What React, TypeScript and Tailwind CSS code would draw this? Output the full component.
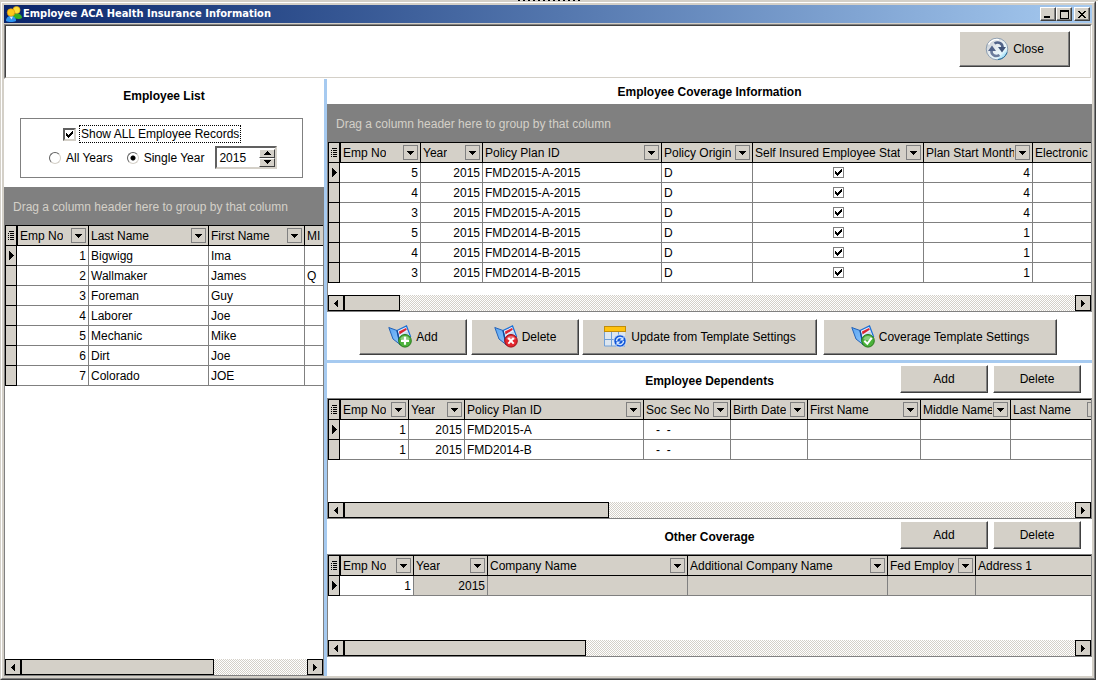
import { useId, useState } from "react";
import type { ReactNode } from "react";
import clsx from "clsx";

type Cell = string | boolean;

type Column = {
  label: string;
  width?: string;
  align?: "right" | "center";
  filter?: boolean;
};

const employeeColumns: Column[] = [
  { label: "Emp No", width: "w-[72px]", align: "right", filter: true },
  { label: "Last Name", width: "w-[120px]", filter: true },
  { label: "First Name", width: "w-[96px]", filter: true },
  { label: "MI" },
];

const employees: Cell[][] = [
  ["1", "Bigwigg", "Ima", ""],
  ["2", "Wallmaker", "James", "Q"],
  ["3", "Foreman", "Guy", ""],
  ["4", "Laborer", "Joe", ""],
  ["5", "Mechanic", "Mike", ""],
  ["6", "Dirt", "Joe", ""],
  ["7", "Colorado", "JOE", ""],
];

const coverageColumns: Column[] = [
  { label: "Emp No", width: "w-[81px]", align: "right", filter: true },
  { label: "Year", width: "w-[62px]", align: "right", filter: true },
  { label: "Policy Plan ID", width: "w-[179px]", filter: true },
  { label: "Policy Origin", width: "w-[91px]", filter: true },
  { label: "Self Insured Employee Stat", width: "w-[171px]", align: "center", filter: true },
  { label: "Plan Start Month", width: "w-[109px]", align: "right", filter: true },
  { label: "Electronic" },
];

const coverage: Cell[][] = [
  ["5", "2015", "FMD2015-A-2015", "D", true, "4", ""],
  ["4", "2015", "FMD2015-A-2015", "D", true, "4", ""],
  ["3", "2015", "FMD2015-A-2015", "D", true, "4", ""],
  ["5", "2015", "FMD2014-B-2015", "D", true, "1", ""],
  ["4", "2015", "FMD2014-B-2015", "D", true, "1", ""],
  ["3", "2015", "FMD2014-B-2015", "D", true, "1", ""],
];

const dependentColumns: Column[] = [
  { label: "Emp No", width: "w-[69px]", align: "right", filter: true },
  { label: "Year", width: "w-[56px]", align: "right", filter: true },
  { label: "Policy Plan ID", width: "w-[179px]", filter: true },
  { label: "Soc Sec No", width: "w-[87px]", filter: true },
  { label: "Birth Date", width: "w-[77px]", filter: true },
  { label: "First Name", width: "w-[113px]", filter: true },
  { label: "Middle Name", width: "w-[90px]", filter: true },
  { label: "Last Name", width: "w-[93px]", filter: true },
];

const dependents: Cell[][] = [
  ["1", "2015", "FMD2015-A", "\u00a0\u00a0\u00a0-\u00a0 -", "", "", "", ""],
  ["1", "2015", "FMD2014-B", "\u00a0\u00a0\u00a0-\u00a0 -", "", "", "", ""],
];

const otherColumns: Column[] = [
  { label: "Emp No", width: "w-[74px]", align: "right", filter: true },
  { label: "Year", width: "w-[74px]", align: "right", filter: true },
  { label: "Company Name", width: "w-[200px]", filter: true },
  { label: "Additional Company Name", width: "w-[200px]", filter: true },
  { label: "Fed Employ", width: "w-[88px]", filter: true },
  { label: "Address 1" },
];

const other: Cell[][] = [["1", "2015", "", "", "", ""]];

/* ---------- small glyphs ---------- */

function DownArrow() {
  return (
    <svg width="7" height="4" viewBox="0 0 7 4" shapeRendering="crispEdges" aria-hidden="true">
      <path d="M0 0h7v1H6v1H5v1H4v1H3V3H2V2H1V1H0z" />
    </svg>
  );
}

function SideArrow({ dir }: { dir: "left" | "right" }) {
  return (
    <svg width="4" height="7" viewBox="0 0 4 7" shapeRendering="crispEdges" aria-hidden="true">
      <path
        d={
          dir === "right"
            ? "M0 0h1v1h1v1h1v1h1v1H3v1H2v1H1v1H0z"
            : "M4 0v7H3V6H2V5H1V4H0V3h1V2h1V1h1V0z"
        }
      />
    </svg>
  );
}

function RowMarker() {
  return (
    <svg className="mx-auto" width="5" height="9" viewBox="0 0 5 9" shapeRendering="crispEdges" aria-hidden="true">
      <path d="M0 0h1v1h1v1h1v1h1v1h1v1H4v1H3v1H2v1H1v1H0z" />
    </svg>
  );
}

function ListMarker() {
  return (
    <svg className="mx-auto" width="6" height="9" viewBox="0 0 6 9" shapeRendering="crispEdges" aria-hidden="true">
      <path d="M1 0h5v1H1zM0 2h1v1H0zM2 2h4v1H2zM0 4h1v1H0zM2 4h4v1H2zM0 6h1v1H0zM2 6h4v1H2zM0 8h1v1H0zM2 8h4v1H2z" />
    </svg>
  );
}

function Tick() {
  return (
    <svg
      className="pointer-events-none absolute inset-0 m-auto"
      width="7"
      height="7"
      viewBox="0 0 7 7"
      shapeRendering="crispEdges"
      aria-hidden="true"
    >
      <path d="M6 0h1v3H6v1H5v1H4v1H3v1H2V6H1V5H0V2h1v1h1v1h1V3h1V2h1V1h1z" />
    </svg>
  );
}

/* ---------- button and window icons ---------- */

function PeopleIcon() {
  return (
    <svg width="16" height="16" viewBox="0 0 16 16" aria-hidden="true">
      <path d="M6 11.500c0-3 2-4 5-4s5 1.500 5 4.500c-2 1.500-6 1-10-.5z" fill="#35b022" />
      <circle cx="10.500" cy="4" r="3.600" fill="#ffe03a" stroke="#e2a80c" strokeWidth=".6" />
      <path d="M0 15c0-3.500 2-5 5-5s5 1.500 5 5c-2.500 1.300-7.500 1.300-10 0z" fill="#2b93f0" />
      <path d="M3.500 10.500l2 3 1.500-3z" fill="#d9ecff" />
      <circle cx="5" cy="6.500" r="3.800" fill="#fcc91c" stroke="#d98a08" strokeWidth=".6" />
    </svg>
  );
}

function RefreshIcon() {
  return (
    <svg width="24" height="24" viewBox="0 0 24 24" aria-hidden="true">
      <defs>
        <linearGradient id="orb" x1="0" y1="0" x2="1" y2="1">
          <stop offset="0" stopColor="#b4bac2" />
          <stop offset=".4" stopColor="#e6ebef" />
          <stop offset=".7" stopColor="#e9f8fd" />
          <stop offset="1" stopColor="#3fbdf0" />
        </linearGradient>
      </defs>
      <circle cx="12" cy="12" r="10.800" fill="url(#orb)" stroke="#8c9db0" strokeWidth="1" />
      <path d="M3.500 7.500A9.500 9.500 0 0 1 14 2.800" fill="none" stroke="#fff" strokeWidth="1.600" />
      <path d="M22 15.500a10.500 10.500 0 0 1-9 7" fill="none" stroke="#2b6f9c" strokeWidth="1" />
      <path d="M9.500 6.500c4-2.500 8.500 0 8 4.500" fill="none" stroke="#52648a" strokeWidth="2.600" />
      <path d="M13 10h8l-4 5.500z" fill="#41547a" />
      <path d="M14.500 18c-4 2.500-8.500 0-8-4.500" fill="none" stroke="#6b7c9c" strokeWidth="2.600" />
      <path d="M11 14H3l4-5.500z" fill="#52648a" />
    </svg>
  );
}

function BookIcon({ badge }: { badge: "add" | "delete" | "check" }) {
  return (
    <svg width="24" height="24" viewBox="0 0 24 24" aria-hidden="true">
      <defs>
        <linearGradient id={`cover-${badge}`} x1="0" y1="0" x2="1" y2="1">
          <stop offset="0" stopColor="#5aa5f2" />
          <stop offset="1" stopColor="#8cc4fa" />
        </linearGradient>
      </defs>
      <path d="M9 5.500L18.500 1l4 10.500-10 8z" fill="#e4effb" stroke="#1c6fd6" strokeWidth="1.300" />
      <path d="M11 6.500l7-3.500.8 1.800-7.300 4.700z" fill="#d92532" />
      <path d="M12 10.500l7.500-4.300 1.800 4.300-8.300 6z" fill="#c2d6ec" />
      <path d="M.8 2.500L9 5.500l3 14-7-5.500z" fill={`url(#cover-${badge})`} stroke="#2563b8" strokeWidth="1" />
      <path d="M9 5.500l3 14" stroke="#114a9c" strokeWidth="1.200" />
      <circle
        cx="17"
        cy="15.800"
        r="6.300"
        fill={badge === "delete" ? "#e3262e" : "#4bb23a"}
        stroke={badge === "delete" ? "#9c0f18" : "#28781c"}
        strokeWidth="1"
      />
      <path d="M12.300 14a5 4.500 0 0 1 9.400 0q-4.700 2.500-9.400 0z" fill="#fff" opacity=".35" />
      {badge === "add" && <path d="M17 11.800v8M13 15.800h8" stroke="#fff" strokeWidth="2.200" />}
      {badge === "delete" && (
        <path d="M14.300 13l5.400 5.600M19.700 13l-5.400 5.600" stroke="#fff" strokeWidth="2" />
      )}
      {badge === "check" && (
        <path d="M13.300 15.800l3 3 4.400-6" fill="none" stroke="#fff" strokeWidth="2" />
      )}
    </svg>
  );
}

function TemplateIcon() {
  return (
    <svg width="24" height="24" viewBox="0 0 24 24" aria-hidden="true">
      <rect x="1" y="7" width="21" height="14" fill="#dde6ef" />
      <path d="M1.500 7v14H22M8.500 7v14M15.500 7v14M1 14.500h21" fill="none" stroke="#6f9fd8" strokeWidth="1" />
      <rect x="1.500" y="1.500" width="21" height="5" fill="#ffc20e" stroke="#c08c0a" strokeWidth="1" />
      <circle cx="17" cy="16" r="6.200" fill="#0f55d8" stroke="#e8f1fb" strokeWidth=".8" />
      <path d="M13.500 16a3.500 3.500 0 0 1 5.500-2.800" fill="none" stroke="#d5e8ff" strokeWidth="1.500" />
      <path d="M20.500 11.500v4h-4z" fill="#d5e8ff" />
      <path d="M20.500 16a3.500 3.500 0 0 1-5.500 2.800" fill="none" stroke="#d5e8ff" strokeWidth="1.500" />
      <path d="M13.500 20.500v-4h4z" fill="#d5e8ff" />
    </svg>
  );
}

/* ---------- controls ---------- */

function PushButton({
  children,
  icon,
  className,
}: {
  children: ReactNode;
  icon?: ReactNode;
  className?: string;
}) {
  return (
    <button
      type="button"
      className={clsx(
        "flex items-center justify-center gap-1 border border-t-white border-l-white border-r-[#404040] border-b-[#404040] bg-[#d4d0c8] whitespace-nowrap shadow-[inset_-1px_-1px_0_#808080]",
        className,
      )}
    >
      {icon}
      <span>{children}</span>
    </button>
  );
}

function CaptionButton({ label, children }: { label: string; children: ReactNode }) {
  return (
    <button
      type="button"
      aria-label={label}
      className="flex h-3.5 w-4 items-center justify-center border border-t-white border-l-white border-r-[#404040] border-b-[#404040] bg-[#d4d0c8] shadow-[inset_-1px_-1px_0_#808080]"
    >
      {children}
    </button>
  );
}

function CellCheckbox({ label, initial }: { label: string; initial: boolean }) {
  const [checked, setChecked] = useState(initial);
  return (
    <span className="relative mx-auto block h-[11px] w-[11px]">
      <input
        type="checkbox"
        aria-label={label}
        checked={checked}
        onChange={(e) => setChecked(e.target.checked)}
        className="block h-[11px] w-[11px] appearance-none border border-[#808080] bg-white"
      />
      {checked && <Tick />}
    </span>
  );
}

function DataGrid({
  name,
  columns,
  rows,
  greyed,
}: {
  name: string;
  columns: Column[];
  rows: Cell[][];
  greyed?: boolean;
}) {
  return (
    <div className="overflow-hidden">
      <table
        aria-label={name}
        className="w-full table-fixed border-separate border-spacing-0 border-t border-l border-black"
      >
        <colgroup>
          <col className="w-[11px]" />
          {columns.map((c) => (
            <col key={c.label} className={c.width} />
          ))}
        </colgroup>
        <thead>
          <tr className="h-5 bg-[#d4d0c8]">
            <th className="border-r border-b border-black p-0">
              <ListMarker />
            </th>
            {columns.map((c, i) => (
              <th
                key={c.label}
                className={clsx(
                  "border-b border-black p-0 text-left font-normal",
                  i === 0 && "border-l",
                  i < columns.length - 1 && "border-r",
                )}
              >
                <div className="flex h-[19px] items-center justify-between gap-px px-0.5">
                  <span className="overflow-hidden whitespace-nowrap">{c.label}</span>
                  {c.filter && (
                    <button
                      type="button"
                      aria-label={`Filter ${c.label}`}
                      className="flex h-[15px] w-[15px] shrink-0 items-center justify-center border border-[#808080]"
                    >
                      <DownArrow />
                    </button>
                  )}
                </div>
              </th>
            ))}
          </tr>
        </thead>
        <tbody>
          {rows.map((row, r) => (
            <tr key={r} className="h-5">
              <td className="border-r border-b border-black bg-[#d4d0c8] p-0">
                {r === 0 && <RowMarker />}
              </td>
              {row.map((value, i) => (
                <td
                  key={i}
                  className={clsx(
                    "overflow-hidden border-b border-[#808080] px-0.5 py-0 whitespace-nowrap",
                    i < columns.length - 1 && "border-r",
                    columns[i].align === "right" && "text-right",
                    greyed && i > 0 && "bg-[#d4d0c8]",
                  )}
                >
                  {typeof value === "boolean" ? (
                    <CellCheckbox label={`${columns[i].label} row ${r + 1}`} initial={value} />
                  ) : (
                    value
                  )}
                </td>
              ))}
            </tr>
          ))}
        </tbody>
      </table>
    </div>
  );
}

function ScrollBar({ thumb }: { thumb: string }) {
  return (
    <div className="flex h-4 bg-[repeating-conic-gradient(#fff_0_25%,#d4d0c8_0_50%)] bg-[length:2px_2px]">
      <button
        type="button"
        aria-label="Scroll left"
        className="flex w-4 items-center justify-center border border-black bg-[#d4d0c8]"
      >
        <SideArrow dir="left" />
      </button>
      <div className={clsx("border border-black bg-[#d4d0c8]", thumb)} />
      <button
        type="button"
        aria-label="Scroll right"
        className="ml-auto flex w-4 items-center justify-center border border-black bg-[#d4d0c8]"
      >
        <SideArrow dir="right" />
      </button>
    </div>
  );
}

function GroupBar() {
  return (
    <div className="flex h-[38px] items-center bg-[#808080] px-2 pt-0.5 text-[#d4d0c8]">
      Drag a column header here to group by that column
    </div>
  );
}

function SectionBar({ title }: { title: string }) {
  return (
    <div className="grid h-[35px] grid-cols-[1fr_auto_1fr] items-center">
      <h2 className="col-start-2 font-bold">{title}</h2>
      <div className="flex h-full items-start justify-end gap-[5px] pt-0.5 pr-[11px]">
        <PushButton className="h-7 w-[88px]">Add</PushButton>
        <PushButton className="h-7 w-[88px]">Delete</PushButton>
      </div>
    </div>
  );
}

function YearSpinner({ disabled }: { disabled: boolean }) {
  const [year, setYear] = useState("2015");
  const step = (by: number) => setYear(String((Number(year) || 2015) + by));
  const stepClass =
    "flex h-[9px] w-4 items-center justify-center border border-t-white border-l-white border-r-[#404040] border-b-[#404040] bg-[#d4d0c8]";

  return (
    <div className="flex h-[23px] w-[62px] items-center border-2 border-t-[#606060] border-l-[#606060] border-r-[#d4d0c8] border-b-[#d4d0c8] bg-white">
      <input
        type="text"
        aria-label="Year"
        value={year}
        disabled={disabled}
        onChange={(e) => setYear(e.target.value)}
        className="h-full w-full min-w-0 pl-0.5 outline-none"
      />
      <div className="flex flex-col">
        <button type="button" aria-label="Next year" className={stepClass} onClick={() => step(1)}>
          <span className="rotate-180">
            <DownArrow />
          </span>
        </button>
        <button type="button" aria-label="Previous year" className={stepClass} onClick={() => step(-1)}>
          <DownArrow />
        </button>
      </div>
    </div>
  );
}

function EmployeeFilter() {
  const id = useId();
  const [showAll, setShowAll] = useState(true);
  const [mode, setMode] = useState<"all" | "single">("single");

  const radio = (value: "all" | "single", label: string) => (
    <div className="flex items-center gap-[5px]">
      <input
        type="radio"
        id={`${id}-${value}`}
        name={`${id}-mode`}
        checked={mode === value}
        onChange={() => setMode(value)}
        className="h-3 w-3 appearance-none rounded-full border border-t-[#606060] border-l-[#606060] border-r-[#d4d0c8] border-b-[#d4d0c8] bg-white checked:bg-[radial-gradient(circle,#000_2px,#fff_3px)]"
      />
      <label htmlFor={`${id}-${value}`} className="whitespace-nowrap">
        {label}
      </label>
    </div>
  );

  return (
    <fieldset aria-label="Employee filter" className="mr-[21px] ml-4 h-[60px] border border-[#808080]">
      <div className="mt-1.5 flex h-[18px] items-center gap-[3px] pl-[42px]">
        <span className="relative h-[13px] w-[13px]">
          <input
            type="checkbox"
            id={`${id}-show`}
            checked={showAll}
            onChange={(e) => setShowAll(e.target.checked)}
            className="block h-[13px] w-[13px] appearance-none border-2 border-t-[#606060] border-l-[#606060] border-r-[#d4d0c8] border-b-[#d4d0c8] bg-white"
          />
          {showAll && <Tick />}
        </span>
        <label htmlFor={`${id}-show`} className="border border-dotted border-black px-px leading-4">
          Show ALL Employee Records
        </label>
      </div>
      <div className="mt-[3px] flex items-center pl-7">
        {radio("all", "All Years")}
        <div className="ml-3.5">{radio("single", "Single Year")}</div>
        <div className="ml-[11px]">
          <YearSpinner disabled={mode === "all"} />
        </div>
      </div>
    </fieldset>
  );
}

export default function App() {
  return (
    <div className="flex min-h-screen flex-col bg-white font-['Liberation_Sans',Arial,sans-serif] text-[12px] leading-[14px] text-black">
      <div className="flex h-px bg-[#d4d0c8]">
        <svg className="mx-auto" width="62" height="1" viewBox="0 0 62 1" aria-hidden="true">
          <path d="M0 .5h62" stroke="#000" strokeDasharray="2 3" />
        </svg>
      </div>

      <main className="mr-0.5 mb-0.5 flex flex-1 flex-col border border-t-[#d4d0c8] border-l-[#d4d0c8] border-r-[#404040] border-b-[#404040] bg-[#d4d0c8]">
        <div className="flex flex-1 flex-col border border-t-white border-l-white border-r-[#808080] border-b-[#808080] p-0.5">
          <header className="flex h-[18px] items-center gap-px bg-linear-to-r from-[#0a246a] to-[#a6caf0] px-0.5">
            <PeopleIcon />
            <h1 className="font-['DejaVu_Sans_Condensed','Liberation_Sans',sans-serif] text-[11px] font-bold whitespace-nowrap text-white">
              Employee ACA Health Insurance Information
            </h1>
            <div className="ml-auto flex">
              <CaptionButton label="Minimize">
                <svg width="8" height="8" viewBox="0 0 8 8" shapeRendering="crispEdges" aria-hidden="true">
                  <path d="M0 6h6v2H0z" />
                </svg>
              </CaptionButton>
              <CaptionButton label="Maximize">
                <svg width="9" height="9" viewBox="0 0 9 9" shapeRendering="crispEdges" aria-hidden="true">
                  <path d="M0 0h9v9H0zM1 2v6h7V2z" fillRule="evenodd" />
                </svg>
              </CaptionButton>
              <div className="ml-0.5">
                <CaptionButton label="Close window">
                  <svg width="8" height="7" viewBox="0 0 8 7" shapeRendering="crispEdges" aria-hidden="true">
                    <path d="M0 0h2v1h1v1h2V1h1V0h2v1H7v1H6v1H5v1h1v1h1v1h1v1H6V6H5V5H3v1H2v1H0V6h1V5h1V4h1V3H2V2H1V1H0z" />
                  </svg>
                </CaptionButton>
              </div>
            </div>
          </header>

          <div className="mt-px flex border border-t-[#808080] border-l-[#808080] border-r-white border-b-white bg-white">
            <div className="flex flex-1 justify-end border border-t-[#404040] border-l-[#404040] border-r-[#d4d0c8] border-b-[#d4d0c8] pt-[5px] pr-5 pb-2.5">
              <PushButton className="h-9 w-[111px]" icon={<RefreshIcon />}>
                Close
              </PushButton>
            </div>
          </div>

          <div className="flex flex-1 bg-white">
            <section className="flex w-80 shrink-0 flex-col">
              <h2 className="pt-2.5 pb-[15px] text-center font-bold">Employee List</h2>
              <EmployeeFilter />
              <div className="mt-[9px] flex flex-1 flex-col justify-between border-r border-b border-l border-[#808080]">
                <div>
                  <GroupBar />
                  <DataGrid name="Employee List" columns={employeeColumns} rows={employees} />
                </div>
                <ScrollBar thumb="w-[193px]" />
              </div>
            </section>

            <div className="w-[3px] shrink-0 bg-[#a6caf0]" />

            <div className="flex min-w-0 flex-1 flex-col">
              <section>
                <h2 className="flex h-[25px] items-center justify-center font-bold">
                  Employee Coverage Information
                </h2>
                <div className="border-r border-b border-l border-[#808080]">
                  <GroupBar />
                  <DataGrid name="Employee Coverage Information" columns={coverageColumns} rows={coverage} />
                  <div className="h-3" />
                  <ScrollBar thumb="w-14" />
                </div>
                <div className="flex pt-[7px] pb-[5px] pl-8">
                  <PushButton className="h-9 w-[108px]" icon={<BookIcon badge="add" />}>
                    Add
                  </PushButton>
                  <PushButton className="ml-1 h-9 w-[108px]" icon={<BookIcon badge="delete" />}>
                    Delete
                  </PushButton>
                  <PushButton className="ml-[3px] h-9 w-[235px]" icon={<TemplateIcon />}>
                    Update from Template Settings
                  </PushButton>
                  <PushButton className="ml-1.5 h-9 w-[234px]" icon={<BookIcon badge="check" />}>
                    Coverage Template Settings
                  </PushButton>
                </div>
              </section>

              <div className="h-[3px] bg-[#a6caf0]" />

              <section>
                <SectionBar title="Employee Dependents" />
                <div className="border border-[#808080]">
                  <DataGrid name="Employee Dependents" columns={dependentColumns} rows={dependents} />
                  <div className="h-[42px]" />
                  <ScrollBar thumb="w-[265px]" />
                </div>
              </section>

              <section>
                <SectionBar title="Other Coverage" />
                <div className="border border-[#808080]">
                  <DataGrid name="Other Coverage" columns={otherColumns} rows={other} greyed />
                  <div className="h-11" />
                  <ScrollBar thumb="w-[242px]" />
                </div>
              </section>
            </div>
          </div>
        </div>
      </main>
    </div>
  );
}
